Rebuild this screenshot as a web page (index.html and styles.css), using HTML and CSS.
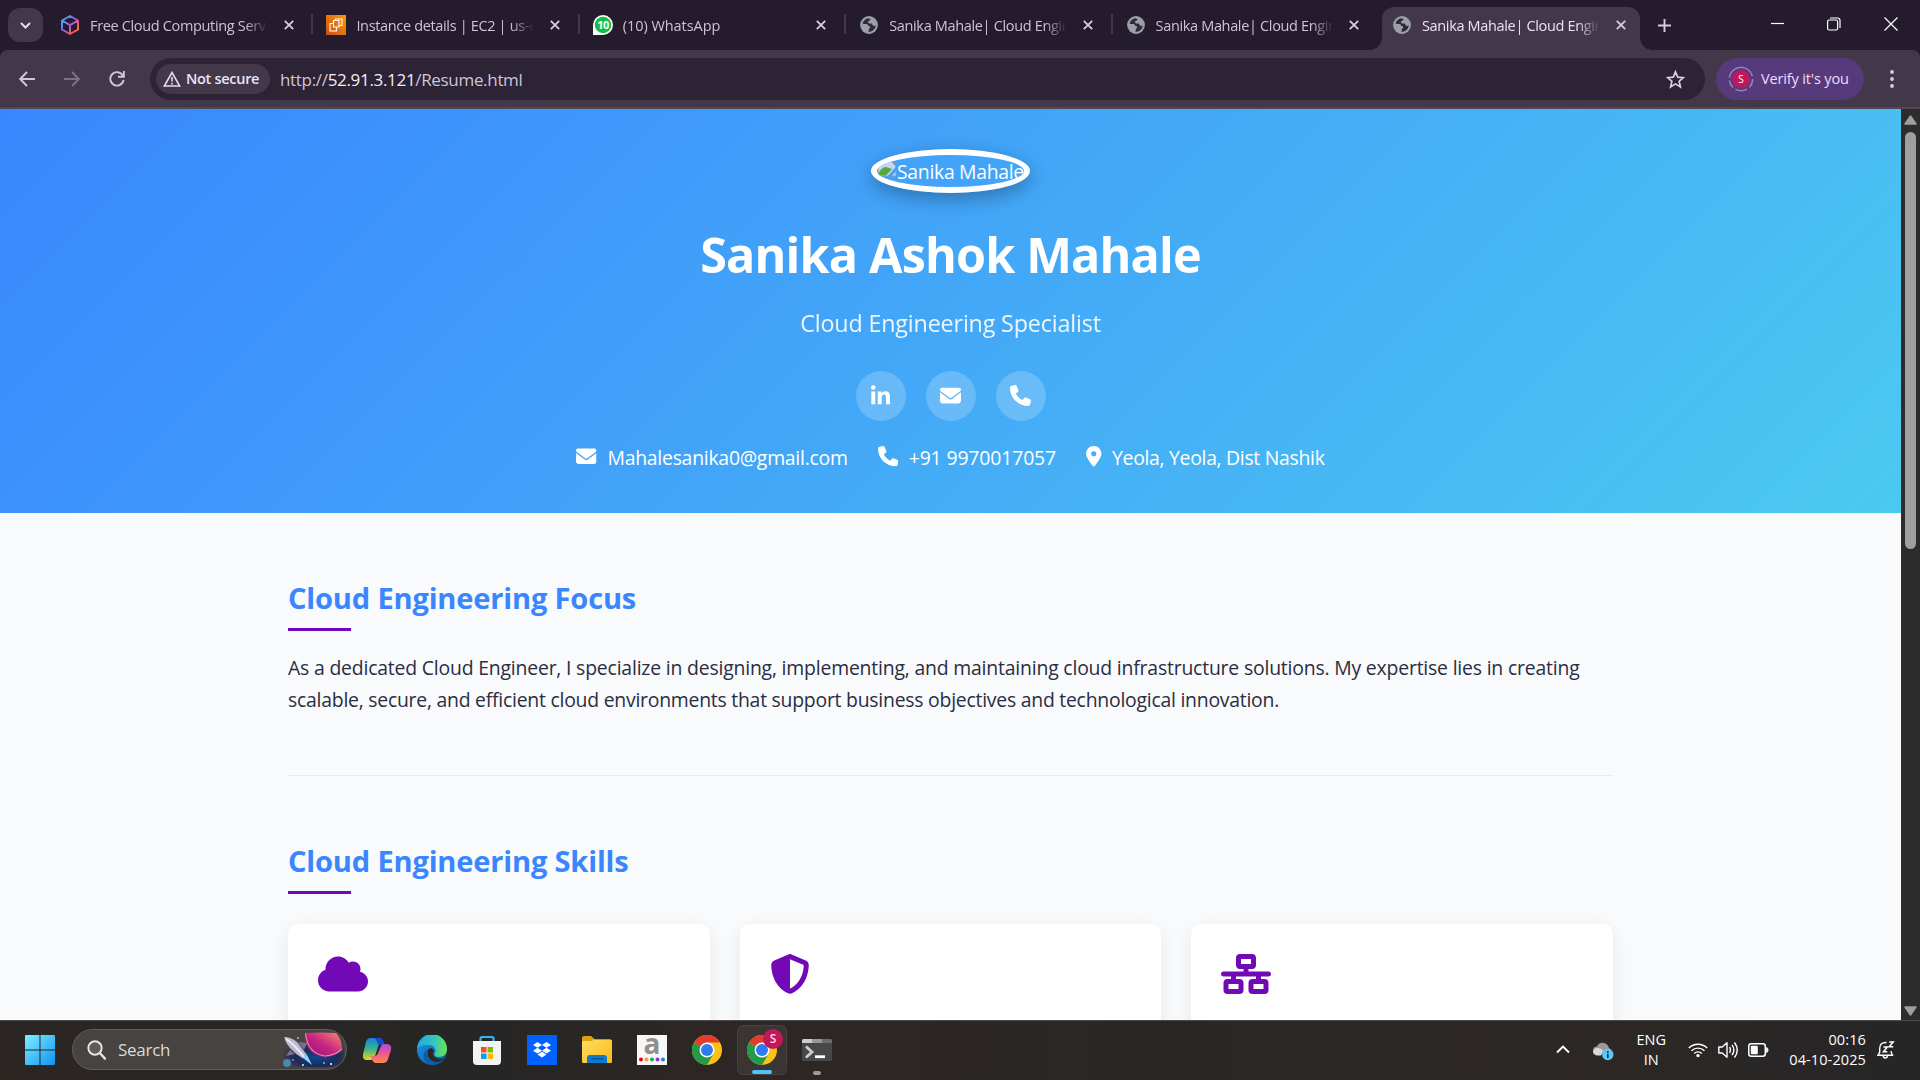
FILE: index.html
```html
<!DOCTYPE html>
<html lang="en">
<head>
<meta charset="utf-8">
<title>Sanika Mahale| Cloud Engineer</title>
<link rel="stylesheet" href="styles.css">
</head>
<body>
<svg class="defs" width="0" height="0" aria-hidden="true">
  <defs>
    <symbol id="x" viewBox="0 0 10 10"><path d="M.8.8l8.400 8.400M9.200.8L.8 9.200" fill="none" stroke="currentColor" stroke-width="1.800"/></symbol>
    <symbol id="globe" viewBox="0 0 18 18"><circle cx="9" cy="9" r="8.900" fill="#9aa0a6"/><path d="M8.200 2.200c-2 .5-4.700 2-5.600 5.200 1.200.9 2.800.6 4 .5 1 .1 1.300.9 1.400 1.800.8.3 1.900.2 2.200 1.200.1 1-.8 1.300-1.200 2-.3.900-.2 2-.8 2.900 4.500.2 7.200-3 7.600-6.300-.9.300-1.900.7-2.800.1-.8-.6-.4-1.800-1.500-2.100-1.200-.2-2.700.3-3.400-.700-.5-.9.300-1.600 1-2 .6-.4 1.500-.7 1.600-1.500z" fill="#33293c"/></symbol>
    <symbol id="envelope" viewBox="0 0 512 512"><path fill="currentColor" d="M48 64C21.500 64 0 85.500 0 112c0 15.100 7.100 29.300 19.200 38.400L236.800 313.600c11.400 8.500 27 8.500 38.400 0L492.800 150.400c12.100-9.100 19.200-23.300 19.200-38.400c0-26.500-21.500-48-48-48H48zM0 176V384c0 35.300 28.700 64 64 64H448c35.300 0 64-28.700 64-64V176L294.400 339.200c-22.800 17.100-54 17.100-76.800 0L0 176z"/></symbol>
    <symbol id="phone" viewBox="0 0 512 512"><path fill="currentColor" d="M164.900 24.600c-7.700-18.600-28-28.500-47.400-23.200l-88 24C12.100 30.200 0 46 0 64C0 311.400 200.600 512 448 512c18 0 33.800-12.100 38.600-29.500l24-88c5.300-19.400-4.600-39.700-23.200-47.400l-96-40c-16.300-6.800-35.200-2.100-46.300 11.600L304.700 368C234.300 334.700 177.300 277.700 144 207.300L193.300 167c13.700-11.200 18.400-30 11.600-46.300l-40-96z"/></symbol>
    <symbol id="chrome" viewBox="0 0 30 30"><circle cx="15" cy="15" r="15" fill="#fbc116"/><path d="M15 15L2 7.500A15 15 0 0 0 15 30l6.500-11.300z" fill="#249a4a"/><path d="M15 15L2 7.500A15 15 0 0 1 28 7.500z" fill="#e33b2e"/><path d="M15 7.500h13l-6.500 11.200z" fill="#fbc116"/><circle cx="15" cy="15" r="7.500" fill="#fff"/><circle cx="15" cy="15" r="6" fill="#2c7bf0"/></symbol>
    <linearGradient id="gWin" x1="0" y1="0" x2="1" y2="1"><stop offset="0" stop-color="#7df0ff"/><stop offset="1" stop-color="#1091f4"/></linearGradient>
    <linearGradient id="gHex" x1="0" y1="0" x2="1" y2="1"><stop offset="0" stop-color="#12c6e8"/><stop offset=".45" stop-color="#9b5cf0"/><stop offset=".8" stop-color="#ff5a4a"/><stop offset="1" stop-color="#ff9d2c"/></linearGradient>
    <linearGradient id="gEc2" x1="0" y1="1" x2="1" y2="0"><stop offset="0" stop-color="#c8511b"/><stop offset="1" stop-color="#f90"/></linearGradient>
    <linearGradient id="gEdge" x1="0" y1=".3" x2="1" y2=".4"><stop offset="0" stop-color="#1fa7e4"/><stop offset=".6" stop-color="#35c9ba"/><stop offset="1" stop-color="#6be04f"/></linearGradient>
    <linearGradient id="gEdge2" x1="0" y1="0" x2="1" y2="1"><stop offset="0" stop-color="#1b9de2"/><stop offset="1" stop-color="#0c4f9f"/></linearGradient>
    <linearGradient id="gFold" x1="0" y1="0" x2="1" y2="1"><stop offset="0" stop-color="#ffdd65"/><stop offset="1" stop-color="#f9b916"/></linearGradient>
    <linearGradient id="gCoA" x1="0" y1="0" x2="0" y2="1"><stop offset="0" stop-color="#1b7fe0"/><stop offset=".5" stop-color="#35b58b"/><stop offset="1" stop-color="#f2cf1f"/></linearGradient>
    <linearGradient id="gCoB" x1="0" y1="0" x2="0" y2="1"><stop offset="0" stop-color="#a34de8"/><stop offset=".5" stop-color="#f0578c"/><stop offset="1" stop-color="#fb8b4d"/></linearGradient>
    <radialGradient id="gSky" cx=".55" cy=".6" r=".6"><stop offset="0" stop-color="#0a4a96"/><stop offset=".6" stop-color="#1c2a58"/><stop offset="1" stop-color="#1c2a58" stop-opacity="0"/></radialGradient>
    <linearGradient id="gPlanet" x1="0" y1="1" x2="1" y2="0"><stop offset="0" stop-color="#8c0f78"/><stop offset=".5" stop-color="#c82482"/><stop offset="1" stop-color="#f98a6c"/></linearGradient>
  </defs>
</svg>

<div class="screen">
  <header class="tabstrip">
    <div class="tabsearch"><svg width="11" height="7" viewBox="0 0 11 7"><path d="M1 1l4.500 4.500L10 1" fill="none" stroke="#e6dcef" stroke-width="2"/></svg></div>
    <div class="tab first"><svg class="fav" width="20" height="20" viewBox="0 0 20 20"><path d="M10 1l8 4.500v9L10 19l-8-4.500v-9zM2 5.500L10 10.200l8-4.700M10 10.200V19" fill="none" stroke="url(#gHex)" stroke-width="2" stroke-linejoin="round"/></svg><span class="title">Free Cloud Computing Services</span><svg class="close"><use href="#x"/></svg></div>
    <div class="tab"><svg class="fav" width="20" height="20" viewBox="0 0 20 20"><path d="M0 0h20v20H0z" fill="url(#gEc2)"/><path d="M7.500 5.500h5.500v6.500H7.500zM9.500 5.500V4h6.500v6.500h-3M7.500 8.500H4V16h6.500v-4" fill="none" stroke="#fff" stroke-width="1.100"/></svg><span class="title">Instance details | EC2 | us-east-1</span><svg class="close"><use href="#x"/></svg></div>
    <div class="tab"><svg class="fav" width="20" height="20" viewBox="0 0 20 20"><path d="M0 20V10A10 10 0 1 1 10 20z" fill="#fff"/><circle cx="10" cy="10" r="8.300" fill="#12bf4a"/><text x="10" y="14" class="badge10">10</text></svg><span class="title wide">(10) WhatsApp</span><svg class="close"><use href="#x"/></svg></div>
    <div class="tab"><svg class="fav globe"><use href="#globe"/></svg><span class="title">Sanika Mahale| Cloud Engineer</span><svg class="close"><use href="#x"/></svg></div>
    <div class="tab"><svg class="fav globe"><use href="#globe"/></svg><span class="title">Sanika Mahale| Cloud Engineer</span><svg class="close"><use href="#x"/></svg></div>
    <div class="tab active"><svg class="fav globe"><use href="#globe"/></svg><span class="title">Sanika Mahale| Cloud Engineer</span><svg class="close"><use href="#x"/></svg></div>
    <svg class="plus" width="13" height="13" viewBox="0 0 13 13"><path d="M6.500 0v13M0 6.500h13" stroke="#d9cce6" stroke-width="1.900"/></svg>
    <div class="winbtns">
      <svg width="13" height="14" viewBox="0 0 13 14"><path d="M0 6.500h13" stroke="#fff" stroke-width="1.200"/></svg>
      <svg width="14" height="14" viewBox="0 0 14 14"><rect x=".6" y="3" width="10" height="10" rx="1.500" fill="none" stroke="#fff" stroke-width="1.200"/><path d="M3 1h7.500Q13 1 13 3.500V11" fill="none" stroke="#fff" stroke-width="1.200"/></svg>
      <svg width="14" height="14" viewBox="0 0 14 14"><path d="M.5.5l13 13M13.500.5l-13 13" stroke="#fff" stroke-width="1.200"/></svg>
    </div>
  </header>

  <div class="toolbar">
    <svg class="nav" width="16" height="16" viewBox="0 0 16 16"><path d="M16 8H1.500M8 1L1.200 8 8 15" fill="none" stroke="#d2c3df" stroke-width="1.900"/></svg>
    <svg class="nav" width="16" height="16" viewBox="0 0 16 16"><path d="M0 8h14.500M8 1l6.800 7L8 15" fill="none" stroke="#7c7085" stroke-width="1.900"/></svg>
    <svg class="nav" width="16" height="16" viewBox="0 0 16 16"><path d="M13.800 4.500A6.700 6.700 0 1 0 14.600 9M14.900 0v5.800H9" fill="none" stroke="#d2c3df" stroke-width="1.900"/></svg>
    <div class="omnibox">
      <div class="chip"><svg width="18" height="16" viewBox="0 0 18 16"><path d="M9 1.500L1.300 15h15.400zM9 6v4.500M9 11.700v1.700" fill="none" stroke="#e6dcef" stroke-width="1.600"/></svg><span>Not secure</span></div>
      <span class="url"><i>http://</i>52.91.3.121<i>/Resume.html</i></span>
      <svg class="star" width="19" height="19" viewBox="0 0 19 19"><path d="M9.500 1.800l2.200 5.300 5.700.5-4.300 3.700 1.300 5.600-4.900-3-4.900 3 1.300-5.600L1.600 7.600l5.700-.5z" fill="none" stroke="#d8d0dd" stroke-width="1.700"/></svg>
    </div>
    <div class="verify"><svg width="26" height="26" viewBox="0 0 26 26"><circle cx="13" cy="13" r="11.700" fill="none" stroke="#9a80c0" stroke-width="1.500" stroke-dasharray="9 3 12 3 8 3 32 3.500"/><circle cx="13" cy="13" r="9" fill="#c2185b"/><text x="13" y="16.500" class="avatar">S</text></svg><span>Verify it's you</span></div>
    <svg width="4" height="18" viewBox="0 0 4 18"><g fill="#d9cce6"><circle cx="2" cy="2" r="1.900"/><circle cx="2" cy="9" r="1.900"/><circle cx="2" cy="16" r="1.900"/></g></svg>
  </div>

  <div class="viewport">
    <main class="page">
      <section class="hero">
        <div class="photo"><svg width="20" height="20" viewBox="0 0 20 20"><path d="M1 1h12l6 6v10H1z" fill="#c5d5f5" stroke="#9a9a9a"/><path d="M1 16q3-8 8-8l6 2-6 6.500H1z" fill="#55a839"/><path d="M20 6.500L10 18h4l6-7z" fill="#43a3fa"/></svg><span>Sanika Mahale</span></div>
        <h1>Sanika Ashok Mahale</h1>
        <p class="role">Cloud Engineering Specialist</p>
        <div class="social">
          <a><svg class="li" viewBox="0 0 448 512"><path fill="currentColor" d="M100.280 448H7.400V148.900h92.880zM53.790 108.100C24.090 108.100 0 83.500 0 53.800a53.790 53.790 0 0 1 107.580 0c0 29.700-24.100 54.300-53.790 54.300zM447.900 448h-92.680V302.400c0-34.700-.7-79.200-48.290-79.200-48.290 0-55.690 37.700-55.690 76.700V448h-92.780V148.900h89.080v40.800h1.300c12.400-23.500 42.690-48.300 87.880-48.300 94 0 111.280 61.900 111.280 142.300V448z"/></svg></a>
          <a><svg><use href="#envelope"/></svg></a>
          <a><svg><use href="#phone"/></svg></a>
        </div>
        <div class="contact">
          <span class="mail"><svg><use href="#envelope"/></svg>Mahalesanika0@gmail.com</span>
          <span class="tel"><svg><use href="#phone"/></svg>+91 9970017057</span>
          <span class="place"><svg class="pin" viewBox="0 0 384 512"><path fill="currentColor" d="M215.700 499.200C267 435 384 279.400 384 192C384 86 298 0 192 0S0 86 0 192c0 87.400 117 243 168.300 307.200c12.300 15.300 35.100 15.300 47.400 0zM192 128a64 64 0 1 1 0 128 64 64 0 1 1 0-128z"/></svg>Yeola, Yeola, Dist Nashik</span>
        </div>
      </section>
      <section class="block focus">
        <h2>Cloud Engineering Focus</h2>
        <p><span class="l1">As a dedicated Cloud Engineer, I specialize in designing, implementing, and maintaining cloud infrastructure solutions. My expertise lies in creating</span><br><span class="l2">scalable, secure, and efficient cloud environments that support business objectives and technological innovation.</span></p>
      </section>
      <section class="block">
        <h2>Cloud Engineering Skills</h2>
        <div class="cards">
          <div class="card"><svg width="50" height="40" viewBox="0 0 640 512"><path fill="currentColor" d="M0 336c0 79.500 64.500 144 144 144H512c70.700 0 128-57.300 128-128c0-61.900-44-113.600-102.400-125.400c4.100-10.700 6.400-22.400 6.400-34.600c0-53-43-96-96-96c-19.700 0-38.100 6-53.300 16.200C367 64.200 315.300 32 256 32C167.600 32 96 103.600 96 192c0 2.700 .1 5.400 .2 8.100C40.200 219.800 0 273.200 0 336z"/></svg></div>
          <div class="card"><svg width="40" height="40" viewBox="0 0 512 512"><path fill="currentColor" d="M256 0c4.600 0 9.200 1 13.400 2.900L457.700 82.800c22 9.300 38.400 31 38.300 57.200c-.5 99.200-41.300 280.700-213.600 363.200c-16.700 8-36.100 8-52.800 0C57.300 420.700 16.500 239.200 16 140c-.1-26.200 16.300-47.900 38.300-57.200L242.700 2.900C246.800 1 251.400 0 256 0zm0 66.800V444.800C394 378 431.100 230.100 432 141.400L256 66.800l0 0z"/></svg></div>
          <div class="card"><svg width="50" height="40" viewBox="0 0 640 512"><path fill="currentColor" d="M256 64H384v64H256V64zM240 0c-26.500 0-48 21.500-48 48v96c0 26.500 21.500 48 48 48h48v32H32c-17.700 0-32 14.300-32 32s14.300 32 32 32h96v32H80c-26.500 0-48 21.500-48 48v96c0 26.500 21.500 48 48 48H240c26.500 0 48-21.500 48-48V368c0-26.500-21.500-48-48-48H192V288H448v32H400c-26.500 0-48 21.500-48 48v96c0 26.500 21.500 48 48 48H560c26.500 0 48-21.500 48-48V368c0-26.500-21.500-48-48-48H512V288h96c17.700 0 32-14.300 32-32s-14.300-32-32-32H352V192h48c26.500 0 48-21.500 48-48V48c0-26.500-21.500-48-48-48H240zM96 448V384H224v64H96zm320-64H544v64H416V384z"/></svg></div>
        </div>
      </section>
    </main>
    <div class="scrollbar">
      <svg width="13" height="10" viewBox="0 0 13 10"><path d="M6.500 1L12 9H1z" fill="#9f9f9f" stroke="#9f9f9f" stroke-width="1.500" stroke-linejoin="round"/></svg>
      <div class="thumb"></div>
      <svg class="down" width="13" height="10" viewBox="0 0 13 10"><path d="M6.500 9L12 1H1z" fill="#9f9f9f" stroke="#9f9f9f" stroke-width="1.500" stroke-linejoin="round"/></svg>
    </div>
  </div>

  <footer class="taskbar">
    <svg class="win" width="30" height="30" viewBox="0 0 30 30"><path d="M0 1Q0 0 1 0h13.500v14.500H0zM15.500 0H29q1 0 1 1v13.500H15.500zM0 15.500h14.500V30H1q-1 0-1-1zM15.500 15.500H30V29q0 1-1 1H15.500z" fill="url(#gWin)"/></svg>
    <div class="search">
      <svg width="19" height="20" viewBox="0 0 19 20"><circle cx="8" cy="8" r="6.700" fill="#ffffff22" stroke="#e8e6e4" stroke-width="1.900"/><path d="M12.800 13l5.200 5.600" stroke="#e8e6e4" stroke-width="2.300" stroke-linecap="round"/></svg>
      <span>Search</span>
      <svg class="art" width="64" height="36" viewBox="0 0 64 36">
        <path d="M2 10h56q6 4 3 18-3 7-11 7H6q-7-6-4-25z" fill="url(#gSky)"/>
        <path d="M23 1q16-1 31 0 6 6 6 16-7 8-18 8Q22 22 23 1z" fill="url(#gPlanet)"/><path d="M23.500 1q2 21 20 23 11-1 16.500-7" fill="none" stroke="#ffb0a8" stroke-width="1.200" opacity=".7"/>
        <path d="M2 5q7 0 13 5l10 13-4 3.500Q5 17 2 5z" fill="#bdb9cf"/><path d="M4 7q9 6 18 18" fill="none" stroke="#eceaf5" stroke-width="2"/><path d="M8 18l-4 6 9-2zM16 10l9 1-3 7z" fill="#77738f"/><path d="M21 26l4-3 5 10z" fill="#8fd6ff"/>
        <circle cx="5" cy="31" r="4" fill="#4d86ae"/><g fill="#fff"><circle cx="16" cy="6" r=".8"/><circle cx="21" cy="33" r=".9"/><circle cx="42" cy="31" r=".8"/><circle cx="49" cy="32" r="1"/><circle cx="11" cy="28" r=".7"/></g>
      </svg>
    </div>
    <div class="apps">
      <i><svg width="30" height="28" viewBox="0 0 30 28"><path d="M9 2h8q3 0 4 3l1 3h-5l-4 12q-1 4-5 4H5q-5 0-4-6l3-12q1-4 5-4z" fill="url(#gCoA)"/><path d="M13 2h4q3 0 4 3l1 4h-3q-3 0-4-3z" fill="#1b49c8"/><path d="M22 8h3q5 0 4 6l-3 9q-1 4-5 4h-7q-3 0-4-4l-1-3h4q2 0 3-3l3-7q1-2 3-2z" fill="url(#gCoB)"/></svg></i>
      <i><svg width="30" height="30" viewBox="0 0 30 30"><circle cx="15" cy="15" r="15" fill="url(#gEdge2)"/><path d="M0 14A15 15 0 0 1 30 14c0 5-3.500 8-8 8-4 0-5.500-2-4-4 1.500-2.500 0-7.500-6-8C6 9.600 1 12 0 14z" fill="url(#gEdge)"/><path d="M11 15c-2 6 2 12 9 12 3 0 6-2 8-4-4 2-11 1-12-4q0-2 1-3c-1-3-4-4-6-1z" fill="#2c2725"/><path d="M11 14c-3 6 1 13 8 13.500 4 0 7-2 9-4.500-5 8-14 8-19 4-4-4-3-11 2-13z" fill="#0b5fae"/></svg></i>
      <i><svg width="30" height="30" viewBox="0 0 30 30"><path d="M8.500 7V3.500Q8.500 2 10 2h10q1.500 0 1.500 1.500V7" fill="none" stroke="#35b5ee" stroke-width="2.200"/><path d="M1 6h28v20q0 4-4 4H5q-4 0-4-4z" fill="#f3f3f3"/><path d="M9 12h5.500v5.500H9z" fill="#f25022"/><path d="M15.500 12H21v5.500h-5.500z" fill="#7fba00"/><path d="M9 18.500h5.500V24H9z" fill="#00a4ef"/><path d="M15.500 18.500H21V24h-5.500z" fill="#ffb900"/></svg></i>
      <i><svg width="30" height="30" viewBox="0 0 30 30"><path d="M0 0h30v30H0z" fill="#0061fe"/><path d="M10.500 7l4.500 2.900-4.500 2.900L6 9.900zM19.500 7L24 9.900l-4.500 2.900L15 9.900zM10.500 12.800l4.500 2.900-4.500 2.900L6 15.700zM19.500 12.800l4.500 2.900-4.500 2.900-4.500-2.900zM10.500 19.600l4.500-2.900 4.500 2.900-4.500 3z" fill="#fff"/></svg></i>
      <i><svg width="30" height="28" viewBox="0 0 30 28"><path d="M0 2q0-2 2-2h7l4 3.500h15q2 0 2 2V10H0z" fill="#dfa010"/><path d="M0 6q0-1 1-1h9l2-1.500h16q2 0 2 2V26q0 1-1 1H1q-1 0-1-1z" fill="url(#gFold)"/><path d="M5 27v-5q0-3 3-3h14q3 0 3 3v5z" fill="#0c7bd0"/><path d="M9 22.700h12" stroke="#0a5496" stroke-width="1.400"/></svg></i>
      <i><svg width="30" height="30" viewBox="0 0 30 30"><path d="M0 0h30v30H0z" fill="#f7f7f8"/><text x="15" y="18.500" class="amz">a</text><circle cx="4" cy="24.500" r="2" fill="#e2001a"/><circle cx="9.500" cy="24.500" r="2" fill="#f7a01d"/><circle cx="15" cy="24.500" r="2" fill="#1ba85a"/><circle cx="20.500" cy="24.500" r="2" fill="#8e35d8"/><circle cx="26" cy="24.500" r="2" fill="#1583e0"/></svg></i>
      <i><svg width="30" height="30"><use href="#chrome"/></svg></i>
      <i class="open"><svg width="30" height="30"><use href="#chrome"/></svg><b>S</b><em></em></i>
      <i class="running"><svg width="30" height="22" viewBox="0 0 30 22"><rect width="30" height="22" rx="1.500" fill="#47484a"/><path d="M0 4V1.500Q0 0 1.500 0H10v4z" fill="#ccc"/><path d="M10 0h10v4H10z" fill="#999"/><path d="M20 0h8.500Q30 0 30 1.500V4H20z" fill="#6d6d6d"/><path d="M4 7.500l6 5.500-6 5.500" fill="none" stroke="#cfcfcf" stroke-width="2.800"/><path d="M13 17.700h10" stroke="#fff" stroke-width="2.800"/></svg><em></em></i>
    </div>
    <div class="tray">
      <svg class="up" width="14" height="9" viewBox="0 0 14 9"><path d="M1 7.500l6-6 6 6" fill="none" stroke="#fff" stroke-width="1.900"/></svg>
      <svg class="drive" width="21" height="19" viewBox="0 0 21 19"><path d="M4 12.500a4 4 0 0 1 0-8Q6 0 11 1q4 1 5 5 3 1 3 6.500z" fill="#9c9a99"/><path d="M4 13.500q-4-1-4-4Q1 5.500 5 6q3 0 5 2.500l-2 5z" fill="#d9d8d7"/><circle cx="14.800" cy="12.500" r="5.700" fill="#5ac8fa"/><path d="M14.800 9v1.700M14.800 11.700v4.200" stroke="#12313f" stroke-width="1.600"/></svg>
      <div class="lang">ENG<br>IN</div>
      <svg class="wifi" width="20" height="16" viewBox="0 0 20 16"><g fill="none" stroke="#fff" stroke-width="1.400"><path d="M.8 6a13 13 0 0 1 18.400 0M3.500 8.800a9.200 9.200 0 0 1 13 0M6.200 11.400a5.400 5.400 0 0 1 7.600 0"/></g><circle cx="10" cy="13.600" r="1.700" fill="#fff"/></svg>
      <svg class="vol" width="20" height="18" viewBox="0 0 20 18"><g fill="none" stroke="#fff" stroke-width="1.400"><path d="M.8 6h3.400L9 1.800v14.400L4.200 12H.8z" stroke-linejoin="round"/><path d="M11.500 6.200q2 2.800 0 5.600M14 3.800q3.800 5.200 0 10.400M16.500 1.500q5.500 7.500 0 15"/></g></svg>
      <svg class="bat" width="21" height="14" viewBox="0 0 21 14"><rect x=".8" y=".8" width="16.500" height="12.400" rx="2.500" fill="none" stroke="#fff" stroke-width="1.500"/><rect x="2.800" y="2.800" width="7" height="8.400" rx="1" fill="#fff"/><path d="M18.700 4.500q1.300.5 1.300 2.500t-1.300 2.500z" fill="#fff" stroke="#fff"/></svg>
      <div class="clock">00:16<br>04-10-2025</div>
      <svg class="bell" width="18" height="18" viewBox="0 0 18 18"><g fill="none" stroke="#fff" stroke-width="1.400"><path d="M9.500 1.500Q2.700 1.200 2.700 7.500v3.700L1 14.200h14.500l-1.300-3V10M6 14.500q.5 2.500 2.300 2.500t2.300-2.500"/><path d="M6.500 6h3.800l-3.800 4.700h3.800" stroke-width="1.500"/><path d="M12.200 1h4l-4 4.800h4" stroke-width="1.500"/></g></svg>
    </div>
  </footer>
</div>
</body>
</html>
```

FILE: styles.css
```css
* { box-sizing: border-box; }
body { margin: 0; overflow: hidden; font-family: "Open Sans", "Noto Sans", sans-serif; }
svg { display: block; flex: none; }
h1, h2, p { margin: 0; }
i, em { font-style: normal; }
.defs { position: absolute; }
.screen { width: 1920px; height: 1080px; display: grid; grid-template-rows: 50px 59px 911px 60px; overflow: hidden; background: #241b2d; }

/* tab strip */
.tabstrip { background: #241b2d; display: flex; align-items: flex-start; color: #cfc0dc; font-size: 14.5px; letter-spacing: -.34px; }
.tabsearch { width: 35px; height: 34px; margin: 8px 3px 0 8px; border-radius: 12px; background: #42384a; display: flex; align-items: center; justify-content: center; }
.tab { width: 266.4px; height: 50px; padding: 0 18px 0 13px; display: flex; align-items: center; border-left: 2px solid transparent; border-image: linear-gradient(#0000 14px, #42384a 14px, #42384a 34px, #0000 34px) 1 / 0 0 0 2px; }
.tab.first { border-image: none; padding-left: 12px; margin-right: -1px; }
.tab.first .title { margin-right: 18px; }
.tab .fav { width: 20px; height: 20px; }
.tab .fav.globe { width: 18px; height: 18px; margin: 0 1px; }
.tab .title { width: 178px; margin: 1px 17px 0 10px; overflow: hidden; white-space: nowrap; -webkit-mask: linear-gradient(90deg, #000 155px, transparent 178px); mask: linear-gradient(90deg, #000 155px, transparent 178px); }
.tab .title.wide { letter-spacing: -.05px; }
.tab .close { width: 10px; height: 10px; color: #d9cce6; }
.tab.active { position: relative; width: 258px; height: 43px; margin: 7px 0 0 5px; padding: 0 14px 7px 8px; border-image: none; border-radius: 12px 12px 0 0; background: #42384a; color: #ece2f4; }
.tab.active .title { margin-right: 16px; }
.tab.active::before, .tab.active::after { content: ""; position: absolute; bottom: 0; width: 12px; height: 12px; }
.tab.active::before { left: -14px; background: radial-gradient(circle at 0 0, #241b2d 11.5px, #42384a 12px); }
.tab.active::after { right: -12px; background: radial-gradient(circle at 100% 0, #241b2d 11.5px, #42384a 12px); }
.plus { margin: 19px 0 0 18px; }
.winbtns { margin: 17px 22px 0 auto; display: flex; gap: 43px; }
.badge10 { font: 700 11px "Open Sans", sans-serif; fill: #fff; text-anchor: middle; letter-spacing: -.5px; }

/* toolbar */
.toolbar { background: linear-gradient(#42384a 57px, #4f4854 57px); display: flex; align-items: center; padding: 0 26px 1px 19px; border-radius: 8px 8px 0 0; color: #ece2f4; }
.nav { margin-right: 29px; }
.nav:nth-child(3) { margin-right: 25px; }
.omnibox { width: 1555px; height: 42px; border-radius: 21px; background: #2c2334; display: flex; align-items: center; padding: 0 20px 0 6px; }
.chip { width: 114px; height: 30px; border-radius: 15px; background: #42384a; display: flex; align-items: center; gap: 5px; padding-left: 7px; font-size: 14.5px; font-weight: 600; letter-spacing: -.3px; white-space: nowrap; }
.chip span { margin-top: -2px; }
.url { margin: 1px auto 0 10px; font-size: 17px; letter-spacing: -.32px; color: #f3edf8; }
.url i { color: #cfc4d8; }
.verify { width: 148px; height: 42px; border-radius: 21px; margin: 0 26px 0 11px; background: #563a7c; display: flex; align-items: center; gap: 7px; padding-left: 12px; font-size: 14.5px; letter-spacing: -.14px; color: #f0dcff; white-space: nowrap; }
.verify span { margin-top: -1px; }
.avatar { font: 10px "Open Sans", sans-serif; fill: #fff; text-anchor: middle; }

/* page */
.viewport { display: flex; overflow: hidden; }
.page { width: 1901px; background: #f8fafc; overflow: hidden; color: #2b2d42; font-size: 19.4px; line-height: 32px; }
.hero { height: 404px; padding-top: 40px; color: #fff; background: linear-gradient(135deg, #3a86ff, #4cc9f0); display: flex; flex-direction: column; align-items: center; }
.photo { width: 159px; height: 44px; border: 6px solid #fff; border-radius: 50%; overflow: hidden; box-shadow: 0 6px 19px rgba(0, 0, 0, .3); display: flex; letter-spacing: -.3px; white-space: nowrap; margin-bottom: 21px; }
.photo svg { margin-top: 4px; }
.photo span { margin-top: 1px; }
h1 { font-size: 48.5px; line-height: 80px; font-weight: 700; letter-spacing: -.84px; margin-bottom: 10px; }
.role { font-size: 23.3px; line-height: 38px; letter-spacing: -.16px; opacity: .9; margin-bottom: 29px; }
.social { display: flex; gap: 20px; margin-bottom: 21px; }
.social a { width: 50px; height: 50px; border-radius: 50%; background: rgba(255, 255, 255, .2); display: flex; align-items: center; justify-content: center; padding-bottom: 1px; }
.social svg { width: 21px; height: 21px; }
.social .li { width: 19px; height: 22px; }
.contact { display: flex; gap: 30px; }
.contact span { display: flex; align-items: flex-start; gap: 10.5px; white-space: nowrap; }
.contact svg { width: 20.5px; height: 20.5px; margin-top: 4px; }
.contact .pin { width: 15.5px; }
.mail { letter-spacing: -.25px; }
.tel { letter-spacing: -.13px; }
.place { letter-spacing: -.3px; }

.block { width: 1325px; margin: 0 auto; padding-top: 61px; }
.focus { height: 263px; border-bottom: 1px solid #e9ebef; }
h2 { font-size: 29.1px; line-height: 48px; font-weight: 700; letter-spacing: -.19px; color: #3a86ff; margin-bottom: 21px; }
h2::after { content: ""; display: block; width: 63px; height: 3px; margin-top: 6px; background: #7209b7; }
.block p { white-space: nowrap; }
.l1 { letter-spacing: -.19px; }
.l2 { letter-spacing: -.241px; }
.cards { display: grid; grid-template-columns: repeat(3, 1fr); gap: 30px; margin-top: 30px; }
.card { height: 300px; padding: 30px; border-radius: 10px; background: #fff; color: #7209b7; box-shadow: 0 6px 19px rgba(0, 0, 0, .08); }
.scrollbar { width: 19px; background: #2c2c2c; display: flex; flex-direction: column; align-items: center; padding: 6px 0 4px; }
.thumb { width: 11px; height: 417px; margin-top: 7px; border-radius: 6px; background: #9f9f9f; }
.down { margin-top: auto; }

/* taskbar */
.taskbar { background: linear-gradient(90deg, #2c2623, #262626 25%, #2e2624 38%, #292725 60%, #2d2825 82%, #262527); border-top: 1px solid #4c4a49; display: flex; align-items: center; padding: 0 0 2px 25px; color: #fff; }
.search { width: 275px; height: 41px; margin-left: 17px; border: 1px solid #625e5c; border-radius: 21px; background: #464340; display: flex; align-items: center; padding-left: 14px; overflow: hidden; }
.search span { margin-left: 12px; font-size: 17px; letter-spacing: -.28px; color: #dcdad8; }
.art { margin-left: auto; }
.apps { display: flex; gap: 5px; margin-left: 5px; }
.apps i { width: 50px; height: 50px; border-radius: 6px; display: flex; align-items: center; justify-content: center; position: relative; }
.apps .open { background: #3a3532; border: 1px solid #464140; }
.apps b { position: absolute; right: 3px; top: 3px; width: 20px; height: 20px; border-radius: 50%; background: #c2185b; font: 600 12px/20px "Open Sans", sans-serif; text-align: center; color: #ffd3e4; }
.apps em { position: absolute; bottom: 0; left: 14px; width: 20px; height: 4px; border-radius: 2px; background: #4cc2ff; }
.apps .running em { left: 21px; width: 8px; background: #9b9a99; }
.amz { font: 700 28px "Open Sans", sans-serif; fill: #8f8f8f; text-anchor: middle; }
.tray { display: flex; align-items: center; margin-left: auto; padding-right: 25px; font-size: 14.5px; line-height: 20px; }
.drive { margin-left: 23px; margin-top: 3px; }
.lang { width: 50px; margin-left: 12px; text-align: center; }
.wifi { margin-left: 12px; }
.vol { margin-left: 10px; }
.bat { margin-left: 10px; }
.clock { margin-left: 20px; text-align: right; letter-spacing: .11px; }
.bell { margin-left: 11px; }
```
